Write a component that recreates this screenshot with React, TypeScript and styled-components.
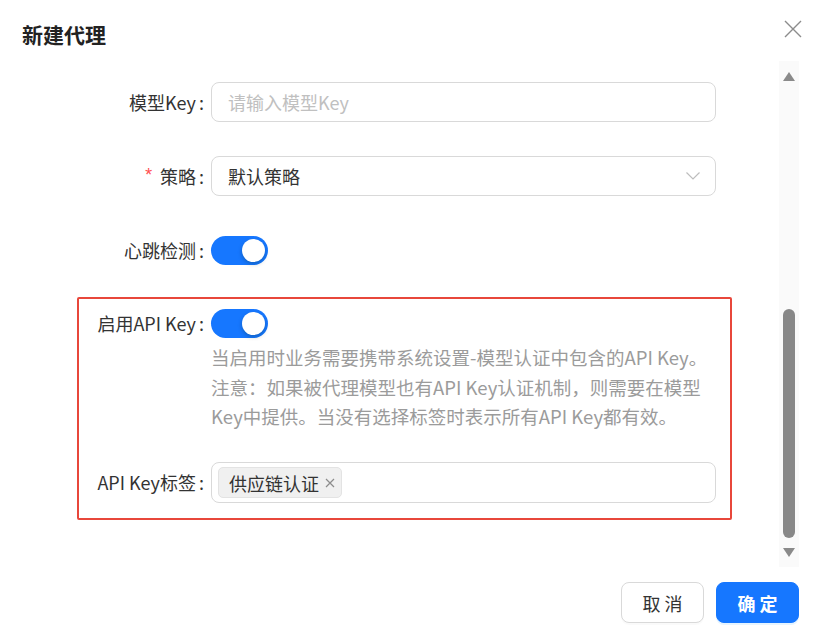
import React from "react";
import styled, { createGlobalStyle } from "styled-components";

const GlobalStyle = createGlobalStyle`
  html, body {
    margin: 0;
    padding: 0;
    background: #ffffff;
  }
  body {
    font-family: "Noto Sans CJK SC", "Noto Sans", sans-serif;
    color: #333333;
  }
  * { box-sizing: border-box; }
`;

const BLUE = "#1677ff";

const Modal = styled.div`
  width: 824px;
  height: 643px;
  background: #ffffff;
  display: flex;
  flex-direction: column;
  overflow: hidden;
`;

const Header = styled.div`
  height: 61px;
  flex: none;
  display: flex;
  justify-content: space-between;
  align-items: flex-start;
  padding: 0 22px;
`;

const Title = styled.div`
  margin-top: 22px;
  font-size: 21px;
  line-height: 25px;
  font-weight: 700;
  color: #222222;
`;

const CloseBtn = styled.button`
  margin-top: 20px;
  width: 18px;
  height: 18px;
  padding: 0;
  border: none;
  background: transparent;
  display: flex;
  cursor: pointer;
`;

const Body = styled.div`
  flex: none;
  height: 506px;
  display: flex;
  padding-right: 25px;
`;

const Content = styled.div`
  flex: 1;
  overflow: hidden;
  padding: 21px 0 0 77px;
`;

const ScrollTrack = styled.div`
  width: 20px;
  flex: none;
  background: #fafafa;
  display: flex;
  flex-direction: column;
  align-items: center;
  padding: 11px 0 10px;
`;

const Arrow = styled.div<{ $down?: boolean }>`
  width: 0;
  height: 0;
  border-left: 6px solid transparent;
  border-right: 6px solid transparent;
  ${(p) =>
    p.$down
      ? `border-top: 9px solid #8a8a8a; margin-top: 10px;`
      : `border-bottom: 9px solid #8a8a8a;`}
`;

const ScrollSpace = styled.div`
  flex: 1;
`;

const Thumb = styled.div`
  width: 12px;
  height: 229px;
  border-radius: 6px;
  background: #888888;
`;

const FormItem = styled.div<{ $label: number; $mb?: number }>`
  display: grid;
  grid-template-columns: ${(p) => p.$label}px 505px;
  align-items: start;
  margin-bottom: ${(p) => (p.$mb ?? 34)}px;
`;

const Label = styled.label`
  height: 40px;
  display: flex;
  align-items: center;
  justify-content: flex-end;
  padding-right: 7px;
  font-size: 18px;
  color: #333333;
  white-space: nowrap;
`;

const Required = styled.span`
  color: #ff4d4f;
  margin-right: 6px;
  font-size: 18px;
  font-family: SimSun, "Liberation Mono", monospace;
`;

const Colon = styled.span`
  margin-left: 3px;
`;

const Control = styled.div`
  display: flex;
  flex-direction: column;
`;

const Input = styled.input`
  height: 40px;
  width: 100%;
  border: 1px solid #d9d9d9;
  border-radius: 8px;
  padding: 0 16px;
  font-size: 18px;
  font-family: inherit;
  color: #333333;
  outline: none;
  &::placeholder {
    color: #c0c0c0;
  }
`;

const SelectBox = styled.div`
  height: 40px;
  border: 1px solid #d9d9d9;
  border-radius: 8px;
  padding: 0 15px 0 16px;
  display: flex;
  align-items: center;
  justify-content: space-between;
  font-size: 18px;
  color: #333333;
`;

const TagsBox = styled.div`
  height: 41px;
  border: 1px solid #d9d9d9;
  border-radius: 8px;
  padding: 0 6px;
  display: flex;
  align-items: center;
  gap: 6px;
`;

const Tag = styled.span`
  height: 31px;
  display: inline-flex;
  align-items: center;
  gap: 5px;
  padding: 0 5px 0 10px;
  background: #f0f0f0;
  border: 1px solid #e3e3e3;
  border-radius: 5px;
  font-size: 18px;
  color: #333333;
`;

const SwitchRow = styled.div`
  height: 40px;
  display: flex;
  align-items: center;
`;

const Switch = styled.button<{ $on: boolean }>`
  width: 57px;
  height: 29px;
  border: none;
  border-radius: 15px;
  padding: 3px;
  background: ${(p) => (p.$on ? BLUE : "#bfbfbf")};
  display: flex;
  justify-content: ${(p) => (p.$on ? "flex-end" : "flex-start")};
  cursor: pointer;
`;

const Knob = styled.span`
  width: 23px;
  height: 23px;
  border-radius: 50%;
  background: #ffffff;
  box-shadow: 0 2px 4px rgba(0, 35, 11, 0.25);
`;

const Extra = styled.div`
  font-size: 18.5px;
  line-height: 29.5px;
  color: #9b9b9b;
`;

const Highlight = styled.div`
  margin-top: -7px;
  width: 655px;
  border: 2px solid #e8473b;
  border-radius: 2px;
  padding: 4px 14px 15px 0;
`;

const Footer = styled.div`
  flex: 1;
  display: flex;
  justify-content: flex-end;
  align-items: flex-start;
  gap: 12px;
  padding: 15px 25px 0 0;
`;

const Button = styled.button<{ $primary?: boolean }>`
  width: 83px;
  height: 41px;
  border-radius: 8px;
  font-family: inherit;
  font-size: 18px;
  letter-spacing: 4px;
  text-indent: 4px;
  cursor: pointer;
  border: 1px solid ${(p) => (p.$primary ? BLUE : "#d9d9d9")};
  background: ${(p) => (p.$primary ? BLUE : "#ffffff")};
  color: ${(p) => (p.$primary ? "#ffffff" : "#333333")};
  font-weight: ${(p) => (p.$primary ? 600 : 400)};
  box-shadow: ${(p) =>
    p.$primary ? "0 2px 0 rgba(5, 145, 255, 0.1)" : "0 2px 0 rgba(0,0,0,0.02)"};
`;

const CloseIcon = () => (
  <svg width="18" height="18" viewBox="0 0 18 18">
    <path d="M1 1 L17 17 M17 1 L1 17" stroke="#8c8c8c" strokeWidth="1.4" fill="none" />
  </svg>
);

const Chevron = () => (
  <svg width="14" height="8" viewBox="0 0 14 8">
    <path d="M0.5 0.5 L7 7 L13.5 0.5" stroke="#bdbdbd" strokeWidth="1.2" fill="none" />
  </svg>
);

const SmallX = () => (
  <svg width="12" height="12" viewBox="0 0 12 12">
    <path d="M2 2 L10 10 M10 2 L2 10" stroke="#8c8c8c" strokeWidth="1.2" fill="none" />
  </svg>
);

export default function App() {
  return (
    <>
      <GlobalStyle />
      <Modal>
        <Header>
          <Title>新建代理</Title>
          <CloseBtn aria-label="close">
            <CloseIcon />
          </CloseBtn>
        </Header>

        <Body>
          <Content>
            <FormItem $label={134}>
              <Label>
                模型Key<Colon>:</Colon>
              </Label>
              <Control>
                <Input placeholder="请输入模型Key" />
              </Control>
            </FormItem>

            <FormItem $label={134}>
              <Label>
                <Required>*</Required>策略<Colon>:</Colon>
              </Label>
              <Control>
                <SelectBox>
                  <span>默认策略</span>
                  <Chevron />
                </SelectBox>
              </Control>
            </FormItem>

            <FormItem $label={134}>
              <Label>
                心跳检测<Colon>:</Colon>
              </Label>
              <Control>
                <SwitchRow>
                  <Switch $on>
                    <Knob />
                  </Switch>
                </SwitchRow>
              </Control>
            </FormItem>

            <Highlight>
              <FormItem $label={132} $mb={30.5}>
                <Label>
                  启用API Key<Colon>:</Colon>
                </Label>
                <Control>
                  <SwitchRow>
                    <Switch $on>
                      <Knob />
                    </Switch>
                  </SwitchRow>
                  <Extra>
                    当启用时业务需要携带系统设置-模型认证中包含的API Key。注意：如果被代理模型也有API Key认证机制，则需要在模型Key中提供。当没有选择标签时表示所有API Key都有效。
                  </Extra>
                </Control>
              </FormItem>

              <FormItem $label={132} $mb={0}>
                <Label>
                  API Key标签<Colon>:</Colon>
                </Label>
                <Control>
                  <TagsBox>
                    <Tag>
                      供应链认证
                      <SmallX />
                    </Tag>
                  </TagsBox>
                </Control>
              </FormItem>
            </Highlight>
          </Content>

          <ScrollTrack>
            <Arrow />
            <ScrollSpace />
            <Thumb />
            <Arrow $down />
          </ScrollTrack>
        </Body>

        <Footer>
          <Button>取消</Button>
          <Button $primary>确定</Button>
        </Footer>
      </Modal>
    </>
  );
}
